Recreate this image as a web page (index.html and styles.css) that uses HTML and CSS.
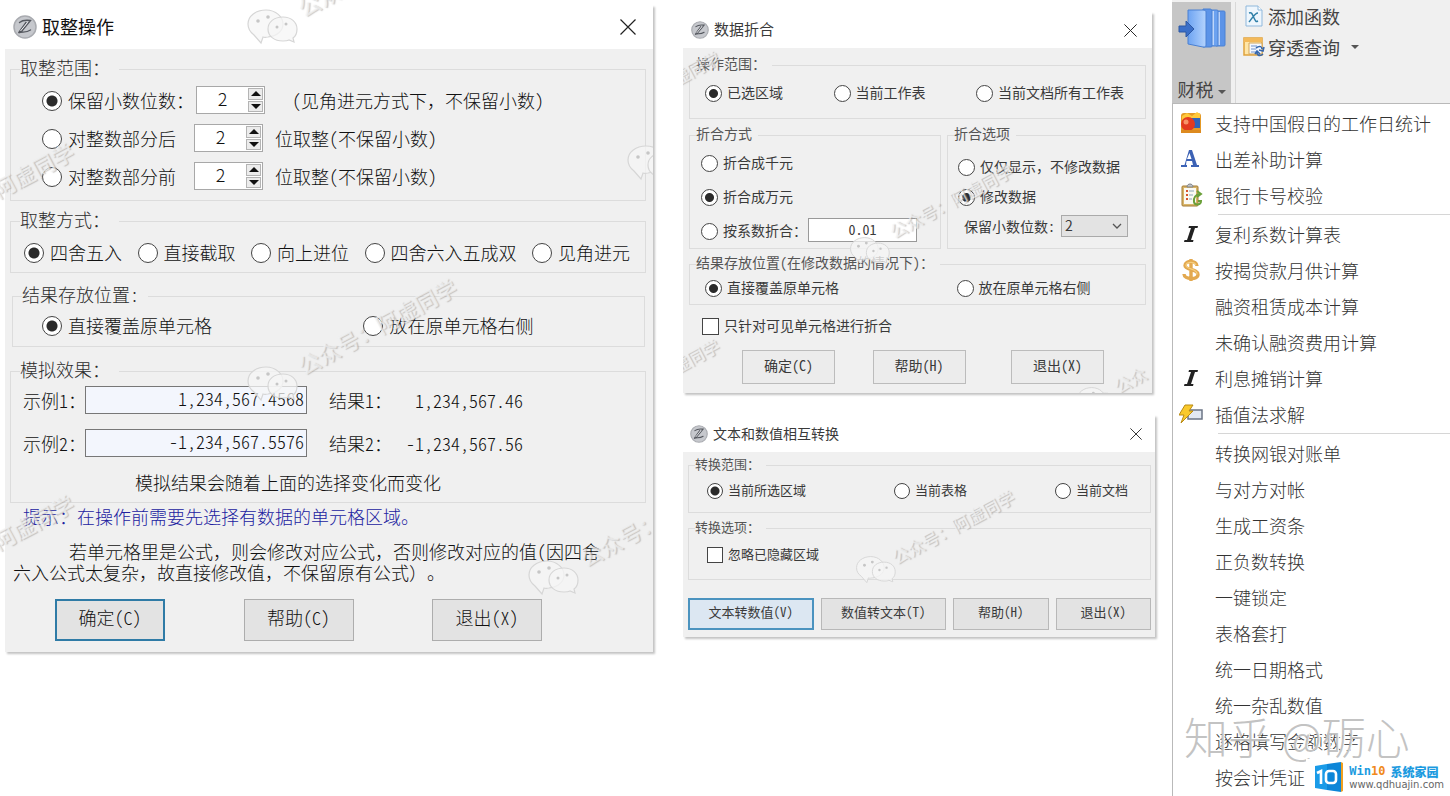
FILE: index.html
```html
<!DOCTYPE html>
<html lang="zh-CN">
<head>
<meta charset="utf-8">
<title>财税工具</title>
<link rel="stylesheet" href="styles.css">
</head>
<body>
<svg class="defs" aria-hidden="true">
  <symbol id="logo" viewBox="0 0 24 24">
    <circle cx="12" cy="12" r="11" fill="#c6c8cd" stroke="#a9abb0" stroke-width="1.500"/>
    <path d="M6.500 7.500C10 4.500 14 5 17.500 5.500L8 17M13 7.500L5.500 18c3.500-2 7 .5 12-3" fill="none" stroke="#55585f" stroke-width="1.400" stroke-linecap="round"/>
    <path d="M14.500 7.500L7.500 16" stroke="#f2f2f4" stroke-width="1"/>
  </symbol>
  <symbol id="close" viewBox="0 0 16 16">
    <path d="M.5.5l15 15M15.500.5l-15 15" stroke="currentColor" stroke-width="1.200" fill="none"/>
  </symbol>
  <symbol id="chat" viewBox="0 0 52 38">
    <g fill="#f6f6f6" fill-opacity=".75" stroke="#d6d6d6" stroke-width="1.200">
      <path d="M20 2C10 2 2 8 2 16c0 5 2 8 6 11l7 8 2-6c2 1 3 0 5 0 9-1 15-6 15-13S30 2 20 2z"/>
      <path d="M37 9c-9 0-15 5-15 12s6 12 15 12c2 0 4 0 6-1l5 2-1-4c3-2 4-5 4-9 0-7-6-12-14-12z"/>
    </g>
    <g fill="#c6c6c6"><circle cx="12" cy="13" r="1.800"/><circle cx="22" cy="9" r="1.800"/><circle cx="31" cy="19" r="1.500"/><circle cx="40" cy="16" r="1.500"/></g>
  </symbol>
</svg>

<main class="page">
  <section class="col col-main">
    <form class="dialog dialog-lg">
      <header class="title-bar">
        <svg class="logo"><use href="#logo"/></svg>
        <h2 class="title">取整操作</h2>
        <button type="button" class="close" aria-label="关闭"><svg><use href="#close"/></svg></button>
      </header>
      <div class="dialog-body">
        <fieldset class="group range">
          <legend>取整范围：</legend>
          <div class="row">
            <label class="opt"><input type="radio" name="range" checked>保留小数位数：</label>
            <span class="spin"><input type="text" value="2" aria-label="小数位数"><span class="arrows"><button type="button" aria-label="增加"><i class="up"></i></button><button type="button" aria-label="减少"><i class="down"></i></button></span></span>
            <span class="note wide"><span class="hw">(</span>见角进元方式下，不保留小数<span class="hw">)</span></span>
          </div>
          <div class="row">
            <label class="opt fixed"><input type="radio" name="range">对整数部分后</label>
            <span class="spin"><input type="text" value="2" aria-label="部分后位数"><span class="arrows"><button type="button" aria-label="增加"><i class="up"></i></button><button type="button" aria-label="减少"><i class="down"></i></button></span></span>
            <span class="note hw">位取整(不保留小数)</span>
          </div>
          <div class="row">
            <label class="opt fixed"><input type="radio" name="range">对整数部分前</label>
            <span class="spin"><input type="text" value="2" aria-label="部分前位数"><span class="arrows"><button type="button" aria-label="增加"><i class="up"></i></button><button type="button" aria-label="减少"><i class="down"></i></button></span></span>
            <span class="note hw">位取整(不保留小数)</span>
          </div>
        </fieldset>
        <fieldset class="group mode">
          <legend>取整方式：</legend>
          <div class="row spread">
            <label class="opt"><input type="radio" name="mode" checked>四舍五入</label>
            <label class="opt"><input type="radio" name="mode">直接截取</label>
            <label class="opt"><input type="radio" name="mode">向上进位</label>
            <label class="opt"><input type="radio" name="mode">四舍六入五成双</label>
            <label class="opt"><input type="radio" name="mode">见角进元</label>
          </div>
        </fieldset>
        <fieldset class="group place">
          <legend class="hw">结果存放位置:</legend>
          <div class="row halves">
            <label class="opt"><input type="radio" name="place" checked>直接覆盖原单元格</label>
            <label class="opt"><input type="radio" name="place">放在原单元格右侧</label>
          </div>
        </fieldset>
        <fieldset class="group preview">
          <legend>模拟效果：</legend>
          <div class="row sample">
            <label for="s1">示例<span class="hw">1</span>：</label>
            <input id="s1" class="sample-input hw" type="text" value="1,234,567.4568">
            <span class="result-label">结果<span class="hw">1</span>：</span>
            <output class="result hw" for="s1">1,234,567.46</output>
          </div>
          <div class="row sample">
            <label for="s2">示例<span class="hw">2</span>：</label>
            <input id="s2" class="sample-input hw" type="text" value="-1,234,567.5576">
            <span class="result-label">结果<span class="hw">2</span>：</span>
            <output class="result hw" for="s2">-1,234,567.56</output>
          </div>
          <p class="preview-note">模拟结果会随着上面的选择变化而变化</p>
        </fieldset>
        <p class="tip">提示：在操作前需要先选择有数据的单元格区域。</p>
        <p class="explain">若单元格里是公式，则会修改对应公式，否则修改对应的值<span class="hw">(</span>因四舍<br>六入公式太复杂，故直接修改值，不保留原有公式）。</p>
        <div class="actions">
          <button type="button" class="btn primary hw">确定(C)</button>
          <button type="button" class="btn hw">帮助(C)</button>
          <button type="button" class="btn hw">退出(X)</button>
        </div>
      </div>
    </form>
    <div class="marks" aria-hidden="true">
      <svg class="chat m1"><use href="#chat"/></svg><span class="mark t1">公众号：阿虚同学</span>
      <svg class="chat m2"><use href="#chat"/></svg>
      <span class="mark t2">阿虚同学</span>
      <svg class="chat m3"><use href="#chat"/></svg><span class="mark t3">公众号：阿虚同学</span>
      <span class="mark t4">阿虚同学</span>
      <svg class="chat m5"><use href="#chat"/></svg><span class="mark t5">公众号：</span>
    </div>
  </section>

  <section class="col col-side">
    <form class="dialog dialog-md">
      <header class="title-bar">
        <svg class="logo"><use href="#logo"/></svg>
        <h2 class="title">数据折合</h2>
        <button type="button" class="close" aria-label="关闭"><svg><use href="#close"/></svg></button>
      </header>
      <div class="dialog-body">
        <fieldset class="group scope">
          <legend>操作范围：</legend>
          <div class="row spread">
            <label class="opt"><input type="radio" name="scope" checked>已选区域</label>
            <label class="opt"><input type="radio" name="scope">当前工作表</label>
            <label class="opt"><input type="radio" name="scope">当前文档所有工作表</label>
          </div>
        </fieldset>
        <div class="pair">
          <fieldset class="group method">
            <legend>折合方式</legend>
            <div class="row"><label class="opt"><input type="radio" name="method">折合成千元</label></div>
            <div class="row"><label class="opt"><input type="radio" name="method" checked>折合成万元</label></div>
            <div class="row"><label class="opt"><input type="radio" name="method">按系数折合：</label><input class="factor hw" type="text" value="0.01" aria-label="系数"></div>
          </fieldset>
          <fieldset class="group choice">
            <legend>折合选项</legend>
            <div class="row"><label class="opt"><input type="radio" name="choice">仅仅显示，不修改数据</label></div>
            <div class="row"><label class="opt"><input type="radio" name="choice" checked>修改数据</label></div>
            <div class="row digits"><label class="hw" for="digits">保留小数位数:</label>
              <span class="select"><select id="digits"><option>2</option></select><svg viewBox="0 0 10 6"><path d="M1 1l4 4 4-4" fill="none" stroke="#555" stroke-width="1.300"/></svg></span></div>
          </fieldset>
        </div>
        <fieldset class="group target">
          <legend>结果存放位置<span class="hw">(</span>在修改数据的情况下<span class="hw">)</span>：</legend>
          <div class="row halves">
            <label class="opt"><input type="radio" name="target" checked>直接覆盖原单元格</label>
            <label class="opt"><input type="radio" name="target">放在原单元格右侧</label>
          </div>
        </fieldset>
        <div class="row visible"><label class="opt"><input type="checkbox">只针对可见单元格进行折合</label></div>
        <div class="actions">
          <button type="button" class="btn hw">确定(C)</button>
          <button type="button" class="btn hw">帮助(H)</button>
          <button type="button" class="btn hw">退出(X)</button>
        </div>
      </div>
      <div class="marks" aria-hidden="true">
        <span class="mark a1">虚同学</span>
        <svg class="chat a2"><use href="#chat"/></svg><span class="mark a3">公众号：阿虚同学</span>
        <span class="mark a4">虚同学</span>
        <svg class="chat a5"><use href="#chat"/></svg><span class="mark a6">公众</span>
      </div>
    </form>

    <form class="dialog dialog-sm">
      <header class="title-bar">
        <svg class="logo"><use href="#logo"/></svg>
        <h2 class="title">文本和数值相互转换</h2>
        <button type="button" class="close" aria-label="关闭"><svg><use href="#close"/></svg></button>
      </header>
      <div class="dialog-body">
        <fieldset class="group convert">
          <legend>转换范围：</legend>
          <div class="row spread">
            <label class="opt"><input type="radio" name="convert" checked>当前所选区域</label>
            <label class="opt"><input type="radio" name="convert">当前表格</label>
            <label class="opt"><input type="radio" name="convert">当前文档</label>
          </div>
        </fieldset>
        <fieldset class="group ignore">
          <legend>转换选项：</legend>
          <div class="row"><label class="opt"><input type="checkbox">忽略已隐藏区域</label></div>
        </fieldset>
        <div class="actions">
          <button type="button" class="btn primary hw">文本转数值(V)</button>
          <button type="button" class="btn hw">数值转文本(T)</button>
          <button type="button" class="btn hw">帮助(H)</button>
          <button type="button" class="btn hw">退出(X)</button>
        </div>
      </div>
      <div class="marks" aria-hidden="true">
        <svg class="chat b1"><use href="#chat"/></svg><span class="mark b2">公众号：阿虚同学</span>
      </div>
    </form>
  </section>

  <aside class="col col-menu">
    <div class="ribbon">
      <button type="button" class="ribbon-main">
        <svg viewBox="0 0 48 40">
          <defs><linearGradient id="bk" x1="0" x2="1"><stop offset="0" stop-color="#6ea4f2"/><stop offset="1" stop-color="#b4d3fd"/></linearGradient></defs>
          <path d="M38 3h7c1 0 2 0 2 1v33c0 1-1 1-2 1h-7z" fill="#5b93e8" stroke="#4a80d2"/>
          <path d="M41 4v33" stroke="#dbe9ff" stroke-width="1.500"/>
          <path d="M32 2h6c1 0 2 0 2 1v34c0 1-1 1-2 1h-6z" fill="#6ca2f0" stroke="#4a80d2"/>
          <path d="M35 3v34" stroke="#dbe9ff" stroke-width="1.500"/>
          <path d="M25 1h7c1 0 2 1 2 2v35c0 1-1 1-2 1h-7z" fill="#5b93e8" stroke="#4a80d2"/>
          <path d="M10 2h15c2 0 3 1 3 2v33c0 2-1 2-3 2l-15-3z" fill="url(#bk)" stroke="#4a80d2"/>
          <path d="M1 18h7v-5l8 8-8 8v-5H1z" fill="#3b6fc8" stroke="#2d58a4"/>
        </svg>
        <span>财税<i class="caret"></i></span>
      </button>
      <div class="ribbon-list">
        <button type="button" class="ribbon-item">
          <svg viewBox="0 0 22 22"><path d="M3 1h12l4 4v16H3z" fill="#eef6fd" stroke="#8fb8dc"/><path d="M15 1v4h4" fill="#fff" stroke="#8fb8dc"/><path d="M6 8c3-1 3 1 5 5s2 4 4 3M15 8c-3 0-5 4-9 9" fill="none" stroke="#2f7fa8" stroke-width="1.500"/></svg>
          添加函数</button>
        <button type="button" class="ribbon-item">
          <svg viewBox="0 0 22 22"><path d="M1 2h18v17H1z" fill="#ffe6a8" stroke="#e0a23c" stroke-width="1.500"/><path d="M1 2h18v4H1z" fill="#f3b95a"/><path d="M6 7h13v11H6z" fill="#f5f8ff" stroke="#d3a65a"/><path d="M8 10h6M8 13h5M8 16h5" stroke="#6f93cf"/><path d="M13 12c4-3 6-1 6 1M21 11l-1 4-4-1M20 18c-3 3-6 1-6-1M12 18l2-3 3 3" fill="none" stroke="#3567ae" stroke-width="1.600"/></svg>
          穿透查询<i class="caret"></i></button>
      </div>
    </div>
    <nav class="menu">
      <ul>
        <li><button type="button"><svg viewBox="0 0 24 24"><rect x="2" y="2" width="20" height="20" rx="3" fill="#e49a26"/><path d="M3 5l5-3 5 3 5-4 3 2v7H3z" fill="#ffc83a"/><rect x="12" y="7" width="9" height="10" fill="#2f63b8"/><circle cx="9" cy="13" r="7" fill="#e33a20"/><circle cx="7" cy="11" r="2.500" fill="#f79468"/><path d="M2 19h20v3H2z" fill="#dd8a1f"/></svg>支持中国假日的工作日统计</button></li>
        <li><button type="button"><svg viewBox="0 0 24 24"><path d="M4 18h1.500L10 3h3l5 15h2v2h-8v-2h2l-1-4H7.500L7 18h1v2H2v-2zM8 12h4.500L10.500 6z" fill="#3c62b5"/></svg>出差补助计算</button></li>
        <li><button type="button"><svg viewBox="0 0 24 24"><rect x="3" y="3" width="16" height="20" rx="1" fill="#d9b66b" stroke="#a47b33"/><rect x="5" y="5" width="12" height="16" fill="#fbfaf3"/><path d="M8 4c0-4 6-4 6 0z" fill="#bfc3c8" stroke="#80848a"/><path d="M7 8h2M7 12h2M7 16h2" stroke="#d6552f" stroke-width="2"/><path d="M10 8h5M10 12h4M10 16h3" stroke="#8da6b8"/><path d="M21 11c-4 0-7 4-6 8s7 3 7-1h-3M18 8l4 3-4 3" fill="none" stroke="#6ba03a" stroke-width="2"/></svg>银行卡号校验</button></li>
        <li class="sep"></li>
        <li><button type="button"><svg viewBox="0 0 24 24"><path d="M10 4h9l-.5 2H16l-4 12h2.500l-.5 2H5l.5-2H8l4-12H9.500z" fill="#222"/></svg>复利系数计算表</button></li>
        <li><button type="button"><svg viewBox="0 0 24 24"><path d="M18 8c0-6-12-6-12-.5 0 5 13 3 13 9 0 6-14 5-14-.5M12 1v22" fill="none" stroke="#e3a94f" stroke-width="3.400"/><path d="M17 7c-2-4-10-3-10 .5 0 4 12 3 11 9" fill="none" stroke="#f5ce80" stroke-width="1.200"/></svg>按揭贷款月供计算</button></li>
        <li><button type="button"><svg viewBox="0 0 24 24"></svg>融资租赁成本计算</button></li>
        <li><button type="button"><svg viewBox="0 0 24 24"></svg>未确认融资费用计算</button></li>
        <li><button type="button"><svg viewBox="0 0 24 24"><path d="M10 4h9l-.5 2H16l-4 12h2.500l-.5 2H5l.5-2H8l4-12H9.500z" fill="#222"/></svg>利息摊销计算</button></li>
        <li><button type="button"><svg viewBox="0 0 24 24"><rect x="9" y="8" width="14" height="9" fill="#e3e9f2" stroke="#6b7485" stroke-width="1.500"/><path d="M6 3h8l-4 6h4L2 21l3-8H0z" fill="#f9c92c" stroke="#b98a12"/></svg>插值法求解</button></li>
        <li class="sep"></li>
        <li><button type="button"><svg viewBox="0 0 24 24"></svg>转换网银对账单</button></li>
        <li><button type="button"><svg viewBox="0 0 24 24"></svg>与对方对帐</button></li>
        <li><button type="button"><svg viewBox="0 0 24 24"></svg>生成工资条</button></li>
        <li><button type="button"><svg viewBox="0 0 24 24"></svg>正负数转换</button></li>
        <li><button type="button"><svg viewBox="0 0 24 24"></svg>一键锁定</button></li>
        <li><button type="button"><svg viewBox="0 0 24 24"></svg>表格套打</button></li>
        <li><button type="button"><svg viewBox="0 0 24 24"></svg>统一日期格式</button></li>
        <li><button type="button"><svg viewBox="0 0 24 24"></svg>统一杂乱数值</button></li>
        <li><button type="button"><svg viewBox="0 0 24 24"></svg>逐格填写金额数字</button></li>
        <li><button type="button"><svg viewBox="0 0 24 24"></svg>按会计凭证</button></li>
      </ul>
      <div class="credit">知乎 @砺心</div>
      <div class="brand">
        <svg viewBox="0 0 28 30"><path d="M0 4l12-2v26L0 26z" fill="#1a9be8"/><path d="M12 2l14-2v30l-14-2z" fill="#0d86d8"/><path d="M26 0l2 1v28l-2 1z" fill="#f0a020"/><path d="M2 11l4-2v13M6 9v13" fill="none" stroke="#fff" stroke-width="2.600"/><rect x="11" y="9" width="10" height="12" rx="3" fill="none" stroke="#fff" stroke-width="2.600"/></svg>
        <div class="brand-text">
          <strong><b>Win<em>10</em></b>系统家园</strong>
          <span>www.qdhuajin.com</span>
        </div>
      </div>
    </nav>
  </aside>
</main>
</body>
</html>
```

FILE: styles.css
```css
* { box-sizing: border-box; }
html, body { margin: 0; }
body {
  background: #fff;
  color: #1c1c1c;
  font-family: "Noto Sans CJK SC", sans-serif;
  font-weight: 300;
  text-spacing-trim: space-all;
  white-space: nowrap;
}
button, input, select { font: inherit; color: inherit; margin: 0; }
button { padding: 0; border: 0; background: none; }
h2, p, ul { margin: 0; padding: 0; font-weight: inherit; }
.defs { position: absolute; width: 0; height: 0; }
.hw { font-feature-settings: "hwid"; }

.page {
  display: grid;
  grid-template-columns: 653fr 502fr 295fr;
  min-height: 100vh;
}
.col-main { position: relative; padding: 5px 0 0 5px; }
.col-side { padding: 12px 0 0 30px; display: flex; flex-direction: column; gap: 22px; }
.col-menu { padding-left: 17px; display: flex; flex-direction: column; }

/* dialogs */
.dialog { position: relative; box-shadow: 2px 2px 2px #c4c4c4; }
.dialog-lg { font-size: 18px; line-height: 22px; color: #111; }
.dialog-md { font-size: 14px; line-height: 18px; color: #3a3a3a; margin-right: 3px; font-weight: 400; }
.dialog-sm { font-size: 13px; line-height: 18px; color: #3a3a3a; font-weight: 400; }
.title-bar { display: flex; align-items: center; gap: 5px; background: #fff; }
.title { flex: 1; font-size: 18px; font-weight: 400; padding-bottom: 2px; }
.logo { width: 24px; height: 24px; }
.close { display: flex; color: #222; }
.close svg { width: 16px; height: 16px; }
.dialog-lg .title-bar { height: 44px; padding: 0 17px 0 8px; }
.dialog-md .title-bar { height: 36px; padding: 0 15px 0 8px; }
.dialog-md .title { font-size: 15px; }
.dialog-sm .title-bar { height: 37px; padding: 0 13px 0 7px; }
.dialog-sm .title { font-size: 14px; }
.dialog-md .logo, .dialog-sm .logo { width: 18px; height: 18px; }
.dialog-md .close svg { width: 13px; height: 13px; }
.dialog-sm .close svg { width: 12px; height: 12px; }
.dialog-body { background: #f0f0f0; }
.dialog-lg .dialog-body { padding: 9px 7px 11px 5px; }
.dialog-md .dialog-body { padding: 8px 6px 9px; }
.dialog-sm .dialog-body { padding: 4px 4px 7px 5px; }

.group { margin: 0; min-width: 0; border: 1px solid #dcdcdc; padding: 0; }
.group legend { margin-left: 9px; padding: 0 9px 4px 0; line-height: 18px; color: #2c2c2c; }
.dialog-md legend, .dialog-sm legend { margin-left: 6px; padding: 0 6px 3px 0; line-height: 15px; color: #555; }
.row { display: flex; align-items: center; height: 38px; padding-bottom: 2px; }
.dialog-md .row, .dialog-sm .row { height: 30px; }
.spread { justify-content: space-between; }
.halves { display: grid; grid-template-columns: 1fr 1fr; }
.opt { display: flex; align-items: center; gap: 6px; }
.dialog-md .opt, .dialog-sm .opt { gap: 5px; }

input[type="radio"], input[type="checkbox"] {
  appearance: none;
  width: 20px;
  height: 20px;
  flex: none;
  margin-top: 2px;
  background: #fff;
  border: 1px solid #444;
}
input[type="radio"] { border-radius: 50%; }
input[type="radio"]:checked { background: radial-gradient(circle, #2b2b2b 0 5px, #fff 6px); }
.dialog-md input[type="radio"], .dialog-md input[type="checkbox"] { width: 17px; height: 17px; }
.dialog-sm input[type="radio"], .dialog-sm input[type="checkbox"] { width: 16px; height: 16px; }
.dialog-md input[type="radio"]:checked, .dialog-sm input[type="radio"]:checked {
  background: radial-gradient(circle, #2b2b2b 0 4px, #fff 5px);
}

.range { padding: 2px 0 4px; }
.range .row { padding-left: 31px; }
.fixed { width: 152px; }
.spin { display: flex; width: 69px; height: 28px; background: #fff; border: 1px solid #a8a8a8; }
.range .opt:not(.fixed) + .spin { margin-left: 2px; }
.spin input { flex: 1; min-width: 0; border: 0; padding: 0 0 4px; background: none; text-align: center; line-height: 22px; }
.arrows { display: flex; flex-direction: column; width: 16px; padding: 1px 1px 1px 0; gap: 1px; }
.arrows button { flex: 1; display: flex; align-items: center; justify-content: center; background: #ececec; border: 1px solid #b4b4b4; }
.up, .down { border: 5px solid transparent; }
.up { border-top: 0; border-bottom-color: #111; }
.down { border-bottom: 0; border-top-color: #111; }
.note { margin-left: 12px; }
.note.wide { margin-left: 27px; }

.mode { margin-top: 9px; padding-top: 2px; }
.mode .row { padding-left: 13px; padding-right: 15px; }
.place { margin: 12px 1px 0 2px; padding-bottom: 1px; }
.place .row { padding-left: 29px; grid-template-columns: 322fr 281fr; }
.preview { margin-top: 13px; padding-bottom: 1px; }
.sample { padding-left: 12px; }
.sample label { width: 62px; }
.sample + .sample { margin-top: 5px; }
.sample-input { width: 222px; height: 28px; border: 1px solid #777; background: #f3f6fd; text-align: right; padding: 0 2px 4px; line-height: 22px; }
.result-label { margin-left: 22px; }
.result { width: 131px; text-align: right; }
.preview-note { line-height: 38px; padding-left: 124px; }
.tip { margin-top: 2px; padding-left: 13px; color: #2222a0; }
.explain { margin-top: 14px; padding-left: 3px; text-indent: 56px; line-height: 21px; }
.actions { display: flex; }
.dialog-lg .actions { margin-top: 16px; padding: 0 104px 0 45px; justify-content: space-between; }
.btn { background: #e3e3e3; border: 1px solid #adadad; text-align: center; }
.dialog-lg .btn { width: 110px; height: 42px; padding-bottom: 6px; }
.dialog-lg .btn.primary { border: 2px solid #2f7ba6; }

.scope { padding: 4px 0 10px; }
.scope .row { padding-left: 15px; padding-right: 21px; }
.pair { display: grid; grid-template-columns: 252fr 199fr; gap: 6px; margin-top: 7px; }
.method { padding-top: 2px; }
.dialog-md .method .row { height: 34px; padding-left: 11px; }
.factor { width: 109px; height: 24px; margin-left: 1px; border: 1px solid #999; background: #fff; text-align: center; padding: 0 0 3px; }
.choice { padding-top: 8px; }
.choice .row { padding-left: 10px; }
.choice .digits { padding-left: 16px; gap: 6px; }
.select { position: relative; display: flex; }
.select select { appearance: none; width: 67px; height: 22px; border: 1px solid #aaa; border-radius: 0; background: #e3e3e3; padding: 0 3px 2px; line-height: 18px; }
.select svg { position: absolute; right: 6px; top: 8px; width: 10px; height: 6px; pointer-events: none; }
.target { margin-top: 6px; padding-bottom: 1px; }
.target .row { padding-left: 15px; grid-template-columns: 251fr 188fr; }
.visible { margin-top: 6px; padding-left: 13px; }
.dialog-md .actions { margin-top: 9px; padding: 0 42px 0 53px; justify-content: space-between; }
.dialog-md .btn { width: 93px; height: 34px; padding-bottom: 4px; background: #ececec; border-color: #bcbcbc; }
.dialog-md .btn:nth-child(2) { margin-right: 8px; }

.convert { padding: 2px 0 6px; }
.convert .row { padding-left: 18px; padding-right: 22px; }
.ignore { margin-top: 6px; padding: 3px 0 9px; }
.ignore .row { padding-left: 18px; }
.dialog-sm .actions { margin-top: 18px; display: grid; grid-template-columns: 125fr 125fr 95fr 95fr; gap: 7px; }
.dialog-sm .btn { height: 32px; padding-bottom: 4px; border-color: #b8b8b8; }
.dialog-sm .btn.primary { background: #dce7f2; border: 2px solid #4b93bf; }

/* translucent marks laid over the dialogs */
.marks { position: absolute; inset: 0; overflow: hidden; pointer-events: none; }
.chat { position: absolute; width: 52px; height: 38px; }
.mark {
  position: absolute;
  font-size: 22px;
  line-height: 26px;
  font-weight: 500;
  color: rgba(244, 244, 244, .7);
  text-shadow: 1px 1px 1px rgba(150, 150, 150, .5);
  transform: rotate(-28deg);
  transform-origin: left center;
}
.m1 { left: 246px; top: 8px; }
.t1 { left: 299px; top: -4px; }
.m2 { left: 626px; top: 144px; }
.t2 { left: -6px; top: 177px; }
.m3 { left: 246px; top: 365px; }
.t3 { left: 299px; top: 354px; }
.t4 { left: -6px; top: 529px; }
.m5 { left: 527px; top: 559px; }
.t5 { left: 581px; top: 546px; }
.dialog-md .chat, .dialog-sm .chat { width: 41px; height: 30px; }
.dialog-md .mark, .dialog-sm .mark { font-size: 17px; line-height: 20px; }
.a1 { left: -10px; top: 58px; }
.a2 { left: 166px; top: 224px; }
.a3 { left: 208px; top: 211px; }
.a4 { left: -10px; top: 346px; }
.a5 { left: 393px; top: 374px; }
.a6 { left: 432px; top: 366px; }
.b1 { left: 172px; top: 140px; }
.b2 { left: 210px; top: 134px; }

/* ribbon and drop-down menu */
.ribbon { display: flex; height: 103px; background: #f0f0f0; color: #444; font-size: 18px; line-height: 24px; padding-top: 2px; }
.ribbon-main { width: 59px; background: #c6c6c6; display: flex; flex-direction: column; align-items: center; justify-content: space-between; padding: 6px 0 2px; line-height: 24px; }
.ribbon-main svg { width: 48px; height: 40px; }
.ribbon-list { flex: 1; margin-left: 4px; padding-left: 7px; border-left: 1px solid #d8d8d8; display: flex; flex-direction: column; align-items: flex-start; gap: 6px; }
.ribbon-item { display: flex; align-items: center; gap: 3px; height: 25px; line-height: 24px; padding-top: 3px; }
.ribbon-item svg { width: 22px; height: 22px; }
.ribbon, .ribbon button { font-weight: 400; }
.caret { display: inline-block; border: 4px solid transparent; border-top-color: #555; border-bottom: 0; margin-left: 4px; vertical-align: middle; }
.ribbon-item .caret { margin-left: 8px; }
.menu { position: relative; flex: 1; border: 1px solid #b9b9b9; border-width: 1px 0 0 1px; background: #fff; padding-top: 2px; }
.menu ul { list-style: none; }
.menu li button { display: flex; align-items: center; gap: 12px; width: 100%; height: 36px; padding: 0 0 2px 6px; font-size: 18px; color: #333; text-align: left; }
.menu li svg { width: 24px; height: 24px; }
.menu .sep { height: 3px; margin-left: 45px; border-top: 1px solid #d6d6d6; }
.credit {
  position: absolute;
  left: 11px;
  bottom: 34px;
  font-size: 44px;
  line-height: 52px;
  color: rgba(185, 185, 185, .85);
  text-shadow: 1px -1px 0 #fff;
  pointer-events: none;
}
.brand { position: absolute; right: 0; bottom: 0; display: flex; align-items: center; gap: 6px; padding: 3px 6px 4px 9px; background: #fff; }
.brand svg { width: 28px; height: 30px; }
.brand-text { display: flex; flex-direction: column; }
.brand strong { display: flex; gap: 5px; font-size: 12px; line-height: 15px; font-weight: 900; color: #1c9be0; }
.brand b { font-family: "DejaVu Sans Mono", monospace; font-weight: 700; }
.brand em { font-style: normal; color: #f08a1c; }
.brand-text span { font: 10px/11px "DejaVu Sans", sans-serif; color: #666; }
```
